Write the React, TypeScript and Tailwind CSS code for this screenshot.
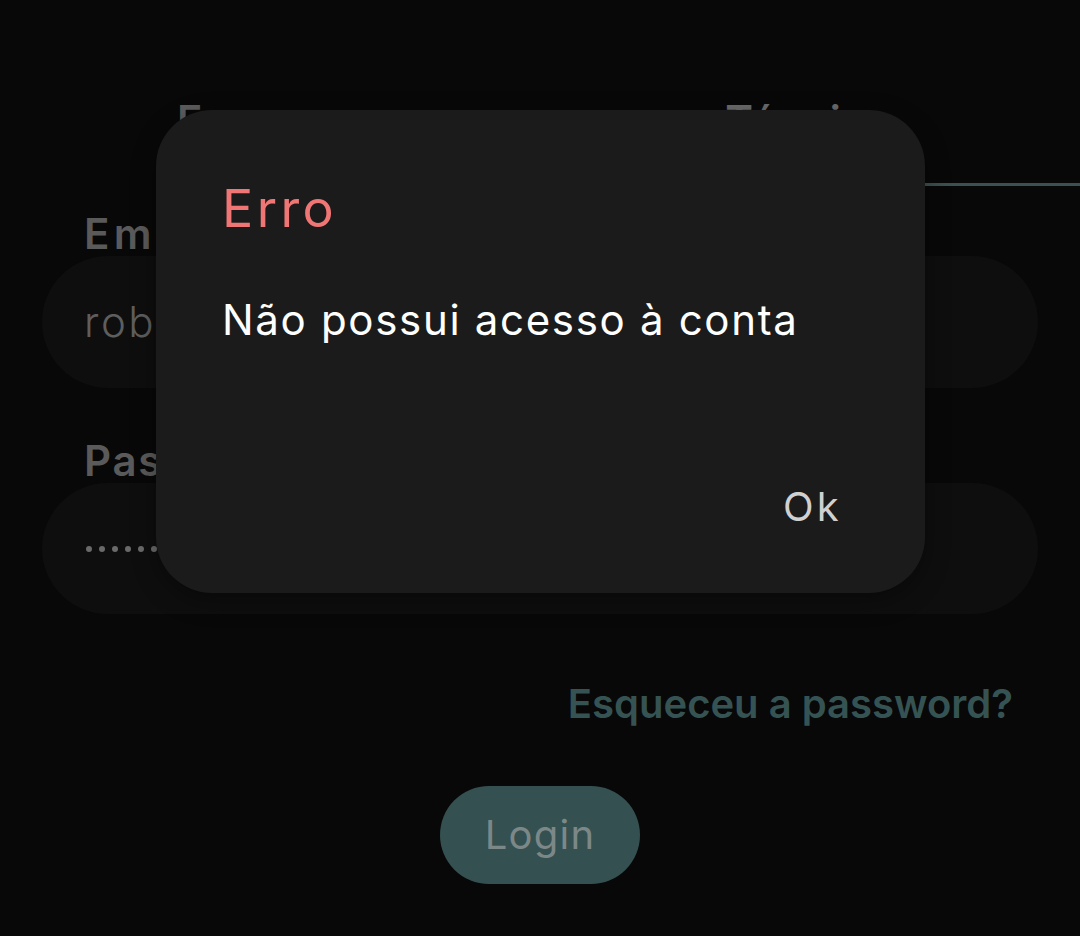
import React from "react";

export default function App() {
  return (
    <div
      className="relative w-[1080px] h-[936px] overflow-hidden bg-[#080808]"
      style={{ fontFamily: "Inter, 'Noto Sans', sans-serif" }}
    >
      {/* Background login page */}
      <div className="flex flex-col">
        {/* Tabs */}
        <div className="grid grid-cols-2 pt-[96px]">
          <div className="flex flex-col items-center">
            <span className="text-[42px] leading-[50px] font-semibold tracking-[0.03em] text-[#5c5c5c]">Empresa</span>
            <div className="h-[37px]" />
            <div className="h-[3px] w-full" />
          </div>
          <div className="flex flex-col items-center">
            <span className="text-[42px] leading-[50px] font-semibold tracking-[0.03em] text-[#6a6a6a]">Técnico</span>
            <div className="h-[37px]" />
            <div className="h-[3px] w-full bg-[#3b5050]" />
          </div>
        </div>

        {/* Form */}
        <div className="flex flex-col px-[42px]">
          <span className="mt-[23px] pl-[42px] text-[42px] leading-[50px] font-semibold tracking-[0.1em] text-[#5a5a5a]">Email</span>
          <div className="mt-[-3px] h-[132px] rounded-full bg-[#0e0e0e] flex items-center pl-[42px]">
            <span className="text-[42px] leading-[50px] font-light tracking-[0.06em] text-[#5e5e5e]">roberto@empresa.pt</span>
          </div>

          <span className="mt-[48px] pl-[42px] text-[42px] leading-[50px] font-semibold tracking-[0.04em] text-[#5a5a5a]">Password</span>
          <div className="mt-[-3px] h-[131px] rounded-full bg-[#0e0e0e] flex items-center pl-[44px] gap-[7px]">
            {Array.from({ length: 10 }).map((_, i) => (
              <span key={i} className="w-[6px] h-[6px] rounded-full bg-[#6a6a6a]" />
            ))}
          </div>

          <div className="mt-[65px] flex justify-end pr-[25px]">
            <span className="text-[40px] leading-[50px] font-semibold text-[#365353]">Esqueceu a password?</span>
          </div>

          <div className="mt-[57px] flex justify-center">
            <div className="w-[200px] h-[98px] rounded-full bg-[#355050] flex items-center justify-center">
              <span className="text-[40px] leading-[50px] font-normal tracking-[0.03em] text-[#7c8888]">Login</span>
            </div>
          </div>
        </div>
      </div>

      {/* Dialog */}
      <div className="absolute left-[156px] top-[110px] w-[769px] h-[483px] rounded-[56px] bg-[#1b1b1b] shadow-[0_8px_24px_rgba(0,0,0,0.35)] flex flex-col pl-[66px] pr-[83px] pt-[68px]">
        <span className="text-[52px] leading-[62px] font-normal tracking-[0.065em] text-[#f07676]">Erro</span>
        <span className="mt-[55px] text-[42px] leading-[50px] font-normal tracking-[0.04em] text-white">Não possui acesso à conta</span>
        <div className="mt-auto mb-[61px] flex justify-end">
          <span className="text-[40px] leading-[50px] font-normal tracking-[0.08em] text-[#d0d0d0]">Ok</span>
        </div>
      </div>
    </div>
  );
}
